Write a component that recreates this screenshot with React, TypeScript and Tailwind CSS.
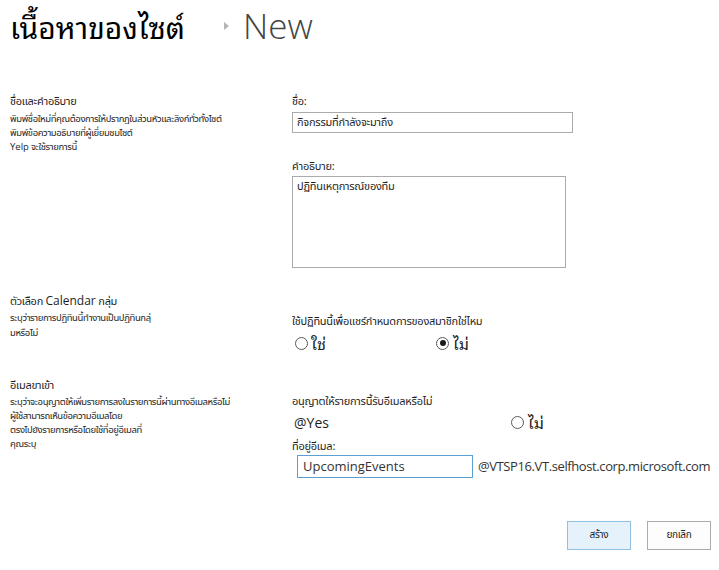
import React from "react";

const thai = "font-['Noto_Sans_Thai','Tahoma','DejaVu_Sans',sans-serif]";
const looped = "font-['Noto_Sans_Thai_Looped','Noto_Sans_Thai',serif]";
const latin = "font-['Open_Sans','Noto_Sans_Thai',sans-serif]";

const heading = "text-[11px] leading-[16px] tracking-[-0.3px]";
const note = "text-[9.5px] leading-[14px] tracking-[-0.4px]";
const label = "text-[11px] leading-[16px] tracking-[-0.25px]";

function Radio({ checked }: { checked?: boolean }) {
  return (
    <span className="inline-flex h-[13px] w-[13px] shrink-0 items-center justify-center rounded-full border border-[#5a5a5a] bg-white">
      {checked && <span className="h-[6px] w-[6px] rounded-full bg-[#1a1a1a]" />}
    </span>
  );
}

export default function App() {
  return (
    <div className={`relative h-[570px] w-[719px] overflow-hidden bg-white text-[#1e1e1e] ${thai}`}>
      {/* page title */}
      <div className="flex h-[50px] items-center pl-[10px] pt-[2px]">
        <h1 className={`${looped} text-[30px] leading-[44px] text-black`}>เนื้อหาของไซต์</h1>
        <span className="ml-[39px] mr-[14px] h-0 w-0 border-y-[4px] border-l-[5px] border-y-transparent border-l-[#b5b5b5]" />
        <span className="font-['Open_Sans',sans-serif] text-[35px] font-light leading-[44px] text-[#444]">
          New
        </span>
      </div>

      {/* name and description */}
      <div className="mt-[44px] flex">
        <div className="w-[282px] shrink-0 pl-[10px]">
          <div className={heading}>ชื่อและคำอธิบาย</div>
          <div className={`mt-[2px] ${note}`}>
            <div>พิมพ์ชื่อใหม่ที่คุณต้องการให้ปรากฏในส่วนหัวและลิงก์ทั่วทั้งไซต์</div>
            <div>พิมพ์ข้อความอธิบายที่ผู้เยี่ยมชมไซต์</div>
            <div>
              <span className="font-['Open_Sans',sans-serif] tracking-normal">Yelp</span> จะใช้รายการนี้
            </div>
          </div>
        </div>
        <div className="flex-1 pl-[10px]">
          <div className={label}>ชื่อ:</div>
          <div className={`mt-[2px] flex h-[21px] w-[281px] items-center border border-[#ababab] px-[4px] ${label}`}>
            กิจกรรมที่กำลังจะมาถึง
          </div>
          <div className={`relative z-10 mt-[26px] inline-block bg-white pb-[1px] pr-[22px] ${label}`}>
            คำอธิบาย:
          </div>
          <div className={`-mt-[1px] h-[92px] w-[274px] border border-[#ababab] px-[4px] pt-[2px] ${label}`}>
            ปฏิทินเหตุการณ์ของทีม
          </div>
        </div>
      </div>

      {/* group calendar */}
      <div className="mt-[25px] flex">
        <div className="w-[282px] shrink-0 pl-[10px]">
          <div className={heading}>
            ตัวเลือก <span className={`${latin} text-[12px] tracking-normal`}>Calendar</span> กลุ่ม
          </div>
          <div className={`mt-[1px] w-[175px] ${note} leading-[15px]`}>
            <div>ระบุว่ารายการปฏิทินนี้ทำงานเป็นปฏิทินกลุ่</div>
            <div>มหรือไม่</div>
          </div>
        </div>
        <div className="flex-1 pl-[10px] pt-[21px]">
          <div className={label}>ใช้ปฏิทินนี้เพื่อแชร์กำหนดการของสมาชิกใช่ไหม</div>
          <div className={`mt-[4px] flex h-[18px] items-center pl-[3px] ${looped} text-[16px]`}>
            <label className="flex w-[141px] items-center gap-[3px]">
              <Radio />
              ใช่
            </label>
            <label className="flex items-center gap-[4px]">
              <Radio checked />
              ไม่
            </label>
          </div>
        </div>
      </div>

      {/* incoming email */}
      <div className="mt-[26px] flex">
        <div className="w-[282px] shrink-0 pl-[10px]">
          <div className={heading}>อีเมลขาเข้า</div>
          <div className={`mt-[1px] ${note}`}>
            <div>ระบุว่าจะอนุญาตให้เพิ่มรายการลงในรายการนี้ผ่านทางอีเมลหรือไม่</div>
            <div>ผู้ใช้สามารถเห็นข้อความอีเมลโดย</div>
            <div>ตรงไปยังรายการหรือโดยใช้ที่อยู่อีเมลที่</div>
            <div>คุณระบุ</div>
          </div>
        </div>
        <div className="flex-1 pl-[10px] pt-[16px]">
          <div className={label}>อนุญาตให้รายการนี้รับอีเมลหรือไม่</div>
          <div className="mt-[3px] flex h-[18px] items-center pl-[2px]">
            <span className={`w-[217px] ${latin} text-[14px]`}>@Yes</span>
            <label className={`flex items-center gap-[4px] ${looped} text-[16px]`}>
              <Radio />
              ไม่
            </label>
          </div>
          <div className={`mt-[8px] ${label} leading-[14px]`}>ที่อยู่อีเมล:</div>
          <div className="flex items-center">
            <div className={`ml-[5px] flex h-[23px] w-[176px] items-center border border-[#5ba0d4] px-[5px] ${latin} text-[13px] text-[#333]`}>
              UpcomingEvents
            </div>
            <span className={`ml-[5px] ${latin} text-[13px] tracking-[-0.4px] text-[#333]`}>
              @VTSP16.VT.selfhost.corp.microsoft.com
            </span>
          </div>
        </div>
      </div>

      {/* buttons */}
      <div className="mt-[43px] flex justify-end gap-[16px] pr-[8px]">
        <button className="flex h-[29px] w-[64px] items-center justify-center border border-[#92c0e0] bg-[#e5f1fb] text-[10px] tracking-[-0.3px]">
          สร้าง
        </button>
        <button className="flex h-[29px] w-[64px] items-center justify-center border border-[#ababab] bg-[#fdfdfd] text-[10px] tracking-[-0.3px]">
          ยกเลิก
        </button>
      </div>
    </div>
  );
}
